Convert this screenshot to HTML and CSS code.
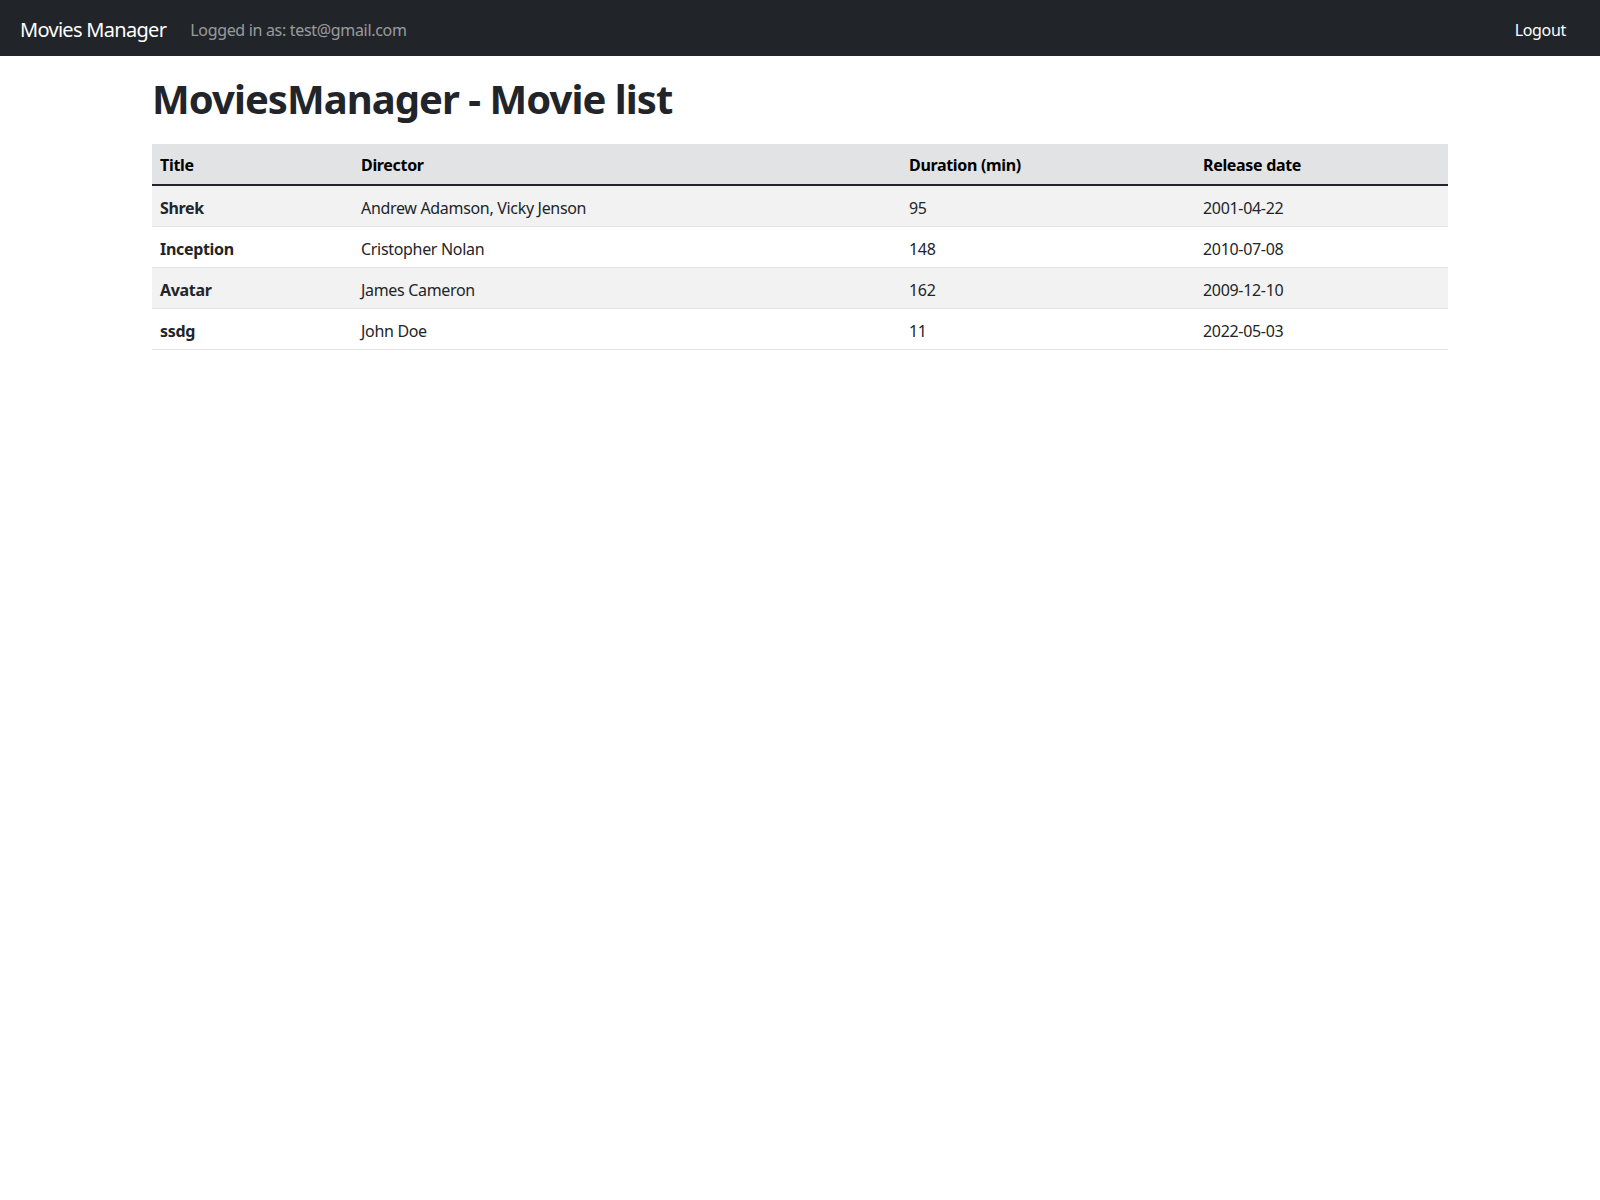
FILE: index.html
```html
<!DOCTYPE html>
<html lang="en">
<head>
<meta charset="utf-8">
<title>Movies Manager</title>
<link rel="stylesheet" href="styles.css">
</head>
<body>
<nav class="navbar">
  <div class="nav-left">
    <a class="brand" href="#">Movies Manager</a>
    <span class="nav-text">Logged in as: test@gmail.com</span>
  </div>
  <a class="nav-link" href="#">Logout</a>
</nav>
<main class="container">
  <h1 class="page-title">MoviesManager - Movie list</h1>
  <table class="movies">
    <thead>
      <tr>
        <th class="col-title">Title</th>
        <th class="col-director">Director</th>
        <th class="col-duration">Duration (min)</th>
        <th class="col-date">Release date</th>
      </tr>
    </thead>
    <tbody>
      <tr><th>Shrek</th><td>Andrew Adamson, Vicky Jenson</td><td>95</td><td>2001-04-22</td></tr>
      <tr><th>Inception</th><td>Cristopher Nolan</td><td>148</td><td>2010-07-08</td></tr>
      <tr><th>Avatar</th><td>James Cameron</td><td>162</td><td>2009-12-10</td></tr>
      <tr><th>ssdg</th><td>John Doe</td><td>11</td><td>2022-05-03</td></tr>
    </tbody>
  </table>
</main>
</body>
</html>
```
FILE: styles.css
```css
* { box-sizing: border-box; }
html, body { margin: 0; padding: 0; }
body {
  font-family: "Noto Sans", "Open Sans", sans-serif;
  font-size: 16px;
  line-height: 1.5;
  letter-spacing: -0.02em;
  color: #212529;
  background: #fff;
}
a { text-decoration: none; }

.navbar {
  display: flex;
  align-items: center;
  justify-content: space-between;
  background: #212529;
  height: 56px;
  padding: 10px 26px 6px 20px;
}
.nav-left { display: flex; align-items: center; }
.brand {
  color: #fff;
  font-size: 20px;
  line-height: 30px;
  letter-spacing: -0.035em;
  padding: 5px 0;
  margin-right: 16px;
}
.nav-text {
  color: rgba(255,255,255,.55);
  padding: 8px;
}
.nav-link {
  color: #fff;
  padding: 8px;
}

.container {
  max-width: 1320px;
  margin: 0 auto;
  padding: 0 12px;
}
.page-title {
  font-size: 40px;
  font-weight: 700;
  line-height: 1.2;
  letter-spacing: -0.024em;
  margin: 19px 0 21px;
}

.movies {
  width: 100%;
  border-collapse: collapse;
  color: #212529;
}
.movies th, .movies td {
  text-align: left;
  padding: 10px 8px 6px;
  border-bottom: 1px solid #dee2e6;
  vertical-align: top;
}
.movies th { font-weight: 700; }
.movies td { font-weight: 400; }
.movies thead th {
  padding: 9px 8px 7px;
  background: #e2e3e5;
  color: #000;
  border-bottom: 2px solid #212529;
}
.movies tbody tr:nth-child(odd) { background: #f2f2f2; }
.col-title { width: 201px; }
.col-director { width: 548px; }
.col-duration { width: 294px; }
```
